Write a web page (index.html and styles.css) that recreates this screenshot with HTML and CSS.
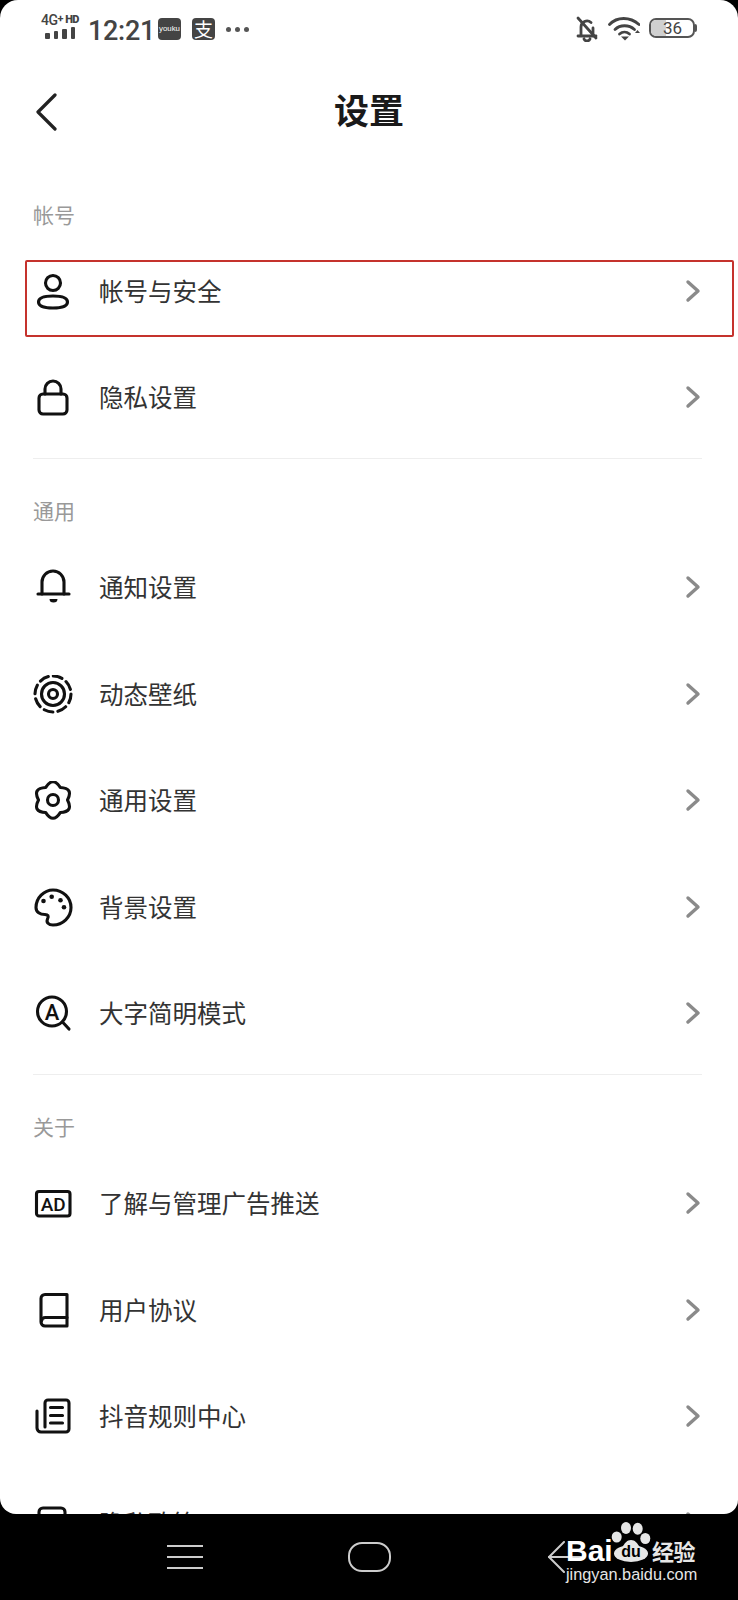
FILE: index.html
```html
<!DOCTYPE html>
<html lang="zh-CN">
<head>
  <meta charset="UTF-8" />
  <meta name="viewport" content="width=device-width, initial-scale=1.0" />
  <title>设置</title>
  <link rel="stylesheet" href="styles.css">
</head>
<body>
  <div class="phone">
    <div class="screen">
      <div class="status-bar">
        <div class="signal">
          <div class="signal-text"><span class="net">4G<sup>+</sup></span><span class="hd">HD</span></div>
          <div class="bars"><i class="b1"></i><i class="b2"></i><i class="b3"></i><i class="b4"></i></div>
        </div>
        <span class="time">12:21</span>
        <span class="app-icon youku">youku</span>
        <span class="app-icon alipay">支</span>
        <span class="more"><i></i><i></i><i></i></span>
        <div class="status-right">
          <svg class="bell-off" viewBox="0 0 22 26" width="22" height="26" fill="none" stroke="#444" stroke-width="2.800" stroke-linecap="round" stroke-linejoin="round">
            <path d="M5 19V11a6 6 0 0 1 10-4.500M17 12v7M2 20h18M8 23a3.200 3 0 0 0 6 0"/>
            <path d="M2 2l18 20"/>
          </svg>
          <svg class="wifi" viewBox="0 0 32 26" width="32" height="26" fill="none" stroke="#444" stroke-width="2.800" stroke-linecap="round">
            <path d="M1.500 8.500C9 .5 22 .5 31 8.500"/>
            <path d="M7 13.500C12 8.500 21 8.500 26.500 13.500"/>
            <path d="M11.500 18C14.500 15.500 18.500 15.500 21.500 18"/>
            <path d="M13 20.500h8l-4 4z" fill="#444" stroke="none"/>
            <path d="M27 17h5l-2.500-3z" fill="#444" stroke="none"/>
          </svg>
          <div class="battery">
            <div class="battery-fill"></div>
            <span class="battery-num">36</span>
          </div>
          <div class="battery-nub"></div>
        </div>
      </div>

      <div class="title-bar">
        <svg class="back" viewBox="0 0 24 38" width="24" height="38" fill="none" stroke="#222" stroke-width="3.200" stroke-linecap="round" stroke-linejoin="round">
          <path d="M20 2L3 19l17 17"/>
        </svg>
        <h1>设置</h1>
      </div>

      <div class="section-label">帐号</div>
      <div class="row">
        <svg class="icon" viewBox="0 0 40 40"><circle cx="20" cy="11" r="7.500"/><path d="M20 24C30 24 34.500 26 34.500 30C34.500 34 30 36 20 36C10 36 5.500 34 5.500 30C5.500 26 10 24 20 24z"/></svg>
        <span class="row-text">帐号与安全</span>
        <svg class="chevron" viewBox="0 0 16 24"><path d="M3 3l10 9-10 9"/></svg>
        <div class="highlight"></div>
      </div>
      <div class="row">
        <svg class="icon" viewBox="0 0 40 40"><path d="M12 16v-5a8 8 0 0 1 16 0v5"/><rect x="6" y="16" width="28" height="20" rx="4"/></svg>
        <span class="row-text">隐私设置</span>
        <svg class="chevron" viewBox="0 0 16 24"><path d="M3 3l10 9-10 9"/></svg>
      </div>
      <div class="divider"></div>

      <div class="section-label">通用</div>
      <div class="row">
        <svg class="icon" viewBox="0 0 40 40"><path d="M9 26V14a11 11 0 0 1 22 0v12"/><path d="M5 26h31"/><path class="solid" d="M16.500 31h8a4 3.500 0 0 1-8 0z"/></svg>
        <span class="row-text">通知设置</span>
        <svg class="chevron" viewBox="0 0 16 24"><path d="M3 3l10 9-10 9"/></svg>
      </div>
      <div class="row">
        <svg class="icon" viewBox="0 0 40 40"><circle cx="20" cy="19" r="18" stroke-dasharray="9 5.100"/><circle cx="20" cy="19" r="11.500"/><circle cx="20" cy="19" r="4.500"/></svg>
        <span class="row-text">动态壁纸</span>
        <svg class="chevron" viewBox="0 0 16 24"><path d="M3 3l10 9-10 9"/></svg>
      </div>
      <div class="row">
        <svg class="icon" viewBox="0 0 40 40"><path d="M34.500 19Q40.800 7 27.250 6.440Q20-5 12.750 6.440Q-.8 7 5.500 19Q-.8 31 12.750 31.560Q20 43 27.250 31.560Q40.800 31 34.500 19z"/><circle cx="20" cy="19" r="5.500"/></svg>
        <span class="row-text">通用设置</span>
        <svg class="chevron" viewBox="0 0 16 24"><path d="M3 3l10 9-10 9"/></svg>
      </div>
      <div class="row">
        <svg class="icon" viewBox="0 0 40 40"><path d="M20 2C30 2 38 10 38 19.500C38 29 30 37 20 37C15.500 37 13 34.500 14.500 31C16 28 15 26.500 12 26.500C7 26.500 3 24 3 19.500C3 10 11 2 20 2Z"/><g class="solid"><circle cx="10.500" cy="13" r="2.300"/><circle cx="18.700" cy="8.800" r="2.300"/><circle cx="27.500" cy="12.200" r="2.300"/><circle cx="31" cy="19.200" r="2.300"/></g></svg>
        <span class="row-text">背景设置</span>
        <svg class="chevron" viewBox="0 0 16 24"><path d="M3 3l10 9-10 9"/></svg>
      </div>
      <div class="row">
        <svg class="icon" viewBox="0 0 40 40"><circle cx="19" cy="17.500" r="14.500"/><path d="M29.500 28l6.500 7"/><text class="icon-text" x="19" y="25.500" text-anchor="middle" font-size="22">A</text></svg>
        <span class="row-text">大字简明模式</span>
        <svg class="chevron" viewBox="0 0 16 24"><path d="M3 3l10 9-10 9"/></svg>
      </div>
      <div class="divider"></div>

      <div class="section-label">关于</div>
      <div class="row">
        <svg class="icon" viewBox="0 0 40 40"><rect x="3.500" y="7.500" width="33.500" height="24.500" rx="2.500"/><text class="icon-text" x="20.200" y="26.500" text-anchor="middle" font-size="19">AD</text></svg>
        <span class="row-text">了解与管理广告推送</span>
        <svg class="chevron" viewBox="0 0 16 24"><path d="M3 3l10 9-10 9"/></svg>
      </div>
      <div class="row">
        <svg class="icon" viewBox="0 0 40 40"><path d="M34 3.500H12a4 4 0 0 0-4 4V31a4 4 0 0 0 4 4h22z"/><path d="M8.500 30a4 4 0 0 1 4-3.500H34"/></svg>
        <span class="row-text">用户协议</span>
        <svg class="chevron" viewBox="0 0 16 24"><path d="M3 3l10 9-10 9"/></svg>
      </div>
      <div class="row">
        <svg class="icon" viewBox="0 0 40 40"><path d="M12 30V6a3 3 0 0 1 3-3h18a3 3 0 0 1 3 3v26a3 3 0 0 1-3 3H8a4 4 0 0 1-4-4V14"/><path d="M17.500 10.500h12M17.500 18.500h12M17.500 26h12"/></svg>
        <span class="row-text">抖音规则中心</span>
        <svg class="chevron" viewBox="0 0 16 24"><path d="M3 3l10 9-10 9"/></svg>
      </div>
      <div class="row">
        <svg class="icon" viewBox="0 0 40 40"><rect x="6" y="4" width="26" height="32" rx="4"/></svg>
        <span class="row-text">隐私政策</span>
        <svg class="chevron" viewBox="0 0 16 24"><path d="M3 3l10 9-10 9"/></svg>
      </div>
    </div>

    <div class="nav-bar">
      <div class="nav-menu"><i></i><i></i><i></i></div>
      <div class="nav-home"></div>
      <svg class="nav-back" viewBox="0 0 36 32" width="36" height="32" fill="none" stroke="#ccc" stroke-width="2" stroke-linecap="round" stroke-linejoin="round">
        <path d="M17 1L2 16l15 15"/><path d="M2 16h32"/>
      </svg>
      <div class="watermark">
        <div class="wm-top">
          <span class="wm-bai">Bai</span>
          <svg class="wm-paw" viewBox="0 0 40 40" width="40" height="40" fill="#e6e6e6">
            <ellipse cx="15" cy="6" rx="5" ry="6"/>
            <ellipse cx="26.700" cy="6.700" rx="5" ry="6"/>
            <ellipse cx="5.700" cy="15" rx="5" ry="5.500"/>
            <ellipse cx="34.300" cy="16.500" rx="5" ry="5.500"/>
            <ellipse cx="20" cy="31.500" rx="17" ry="8.500"/>
            <path d="M20 18c4 0 6 3 8 6H12c2-3 4-6 8-6z"/>
          </svg>
          <span class="wm-du">du</span>
          <span class="wm-cn">经验</span>
        </div>
        <div class="wm-url">jingyan.baidu.com</div>
      </div>
    </div>
  </div>
</body>
</html>
```

FILE: styles.css
```css
* {
  margin: 0;
  padding: 0;
  box-sizing: border-box;
}

html, body {
  width: 738px;
  height: 1600px;
  overflow: hidden;
  background: #000;
}

body {
  font-family: "Noto Sans CJK SC", "Noto Sans", sans-serif;
}

.phone {
  width: 738px;
  height: 1600px;
  display: flex;
  flex-direction: column;
}

.screen {
  height: 1514px;
  background: #fff;
  border-radius: 18px 18px 14px 16px;
  overflow: hidden;
  flex-shrink: 0;
}

/* status bar */
.status-bar {
  height: 58.500px;
  display: flex;
  align-items: flex-start;
  padding: 14px 0 0 41px;
  color: #444;
  font-family: Roboto, sans-serif;
}

.signal {
  width: 38px;
  margin-right: 9px;
}

.signal-text {
  display: flex;
  justify-content: space-between;
  height: 13px;
  line-height: 13px;
  font-size: 14px;
  font-weight: 500;
  letter-spacing: -0.500px;
}

.signal-text sup {
  font-size: 11px;
  font-weight: 700;
  line-height: 0;
  vertical-align: 3px;
}

.hd {
  font-size: 11px;
  font-weight: 900;
  line-height: 9px;
  margin-top: 1px;
}

.bars {
  display: flex;
  align-items: flex-end;
  gap: 4px;
  height: 12px;
  margin-left: 4px;
}

.bars i {
  display: block;
  width: 4.500px;
  background: #444;
  border-radius: 1px;
}

.bars .b1 { height: 6px; }
.bars .b2 { height: 8px; }
.bars .b3 { height: 10px; }
.bars .b4 { height: 12px; }

.time {
  font-size: 27px;
  font-weight: 500;
  line-height: 32px;
  letter-spacing: -0.300px;
  width: 70px;
  margin-top: 1px;
}

.app-icon {
  width: 23px;
  height: 22px;
  margin-top: 4px;
  background: #444;
  color: #fff;
  border-radius: 4px;
  text-align: center;
}

.youku {
  font-size: 7.800px;
  line-height: 22px;
  font-family: "Liberation Sans", sans-serif;
  margin-right: 11px;
}

.alipay {
  font-size: 19px;
  line-height: 22px;
  font-family: "Noto Sans CJK SC", sans-serif;
  margin-right: 11px;
}

.more {
  display: flex;
  gap: 4px;
  margin-top: 13px;
}

.more i {
  display: block;
  width: 5px;
  height: 5px;
  border-radius: 50%;
  background: #555;
}

.status-right {
  display: flex;
  align-items: flex-start;
  margin-left: auto;
  margin-right: 41px;
}

.bell-off {
  margin: 2px 10px 0 0;
}

.wifi {
  margin: 2px 9px 0 0;
}

.battery {
  position: relative;
  width: 46px;
  height: 20px;
  margin-top: 4px;
  border: 2px solid #555;
  border-radius: 7px;
  overflow: hidden;
}

.battery-fill {
  width: 15px;
  height: 100%;
  background: #d0d0d0;
}

.battery-num {
  position: absolute;
  top: 0;
  left: 12px;
  font-size: 17px;
  line-height: 16px;
  color: #444;
}

.battery-nub {
  width: 2px;
  height: 8px;
  margin-top: 10px;
  background: #555;
  border-radius: 0 2px 2px 0;
}

/* title */
.title-bar {
  height: 104px;
  display: flex;
  align-items: center;
  justify-content: center;
  position: relative;
  margin-bottom: 29px;
}

.back {
  position: absolute;
  left: 35px;
  top: 34px;
}

.title-bar h1 {
  font-size: 35px;
  font-weight: 700;
  line-height: 44px;
  margin-bottom: 3px;
  color: #1a1a1a;
}

/* list */
.section-label {
  height: 46px;
  line-height: 44px;
  padding-left: 33px;
  font-size: 21px;
  color: #999;
}

.row {
  position: relative;
  height: 106.400px;
  display: flex;
  align-items: center;
  padding: 0 37px 0 33px;
}

.icon {
  width: 40px;
  height: 40px;
  margin: 2px 26px 0 0;
  flex-shrink: 0;
  fill: none;
  stroke: #111;
  stroke-width: 3.100;
  stroke-linecap: round;
  stroke-linejoin: round;
}

.icon .solid {
  fill: #111;
  stroke: none;
}

.icon-text {
  font-family: Roboto, sans-serif;
  font-weight: 500;
  fill: #111;
  stroke: none;
}

.row-text {
  flex: 1;
  font-size: 24.500px;
  line-height: 36px;
  color: #333;
}

.chevron {
  width: 16px;
  height: 24px;
  fill: none;
  stroke: #8a8a8a;
  stroke-width: 3.400;
  stroke-linecap: round;
  stroke-linejoin: round;
}

.highlight {
  position: absolute;
  left: 25px;
  top: 22px;
  width: 709px;
  height: 77px;
  border: 2px solid #c5322d;
  border-radius: 2px;
}

.divider {
  height: 1px;
  margin: 8px 36px 29px 33px;
  background: #eee;
}

/* bottom nav */
.nav-bar {
  position: relative;
  flex: 1;
  background: #000;
  display: flex;
  align-items: center;
}

.nav-menu {
  width: 36px;
  margin-left: 167px;
  display: flex;
  flex-direction: column;
  gap: 9px;
}

.nav-menu i {
  display: block;
  height: 2px;
  background: #ccc;
}

.nav-home {
  width: 43px;
  height: 30px;
  margin-left: 145px;
  border: 2px solid #ccc;
  border-radius: 14px;
}

.nav-back {
  margin-left: 156px;
}

.watermark {
  position: absolute;
  left: 566px;
  top: 7px;
  color: #e6e6e6;
}

.wm-top {
  display: flex;
  align-items: flex-end;
  height: 41px;
  position: relative;
}

.wm-bai {
  font-family: "Liberation Sans", sans-serif;
  font-weight: 700;
  font-size: 30px;
  line-height: 34px;
  width: 45px;
  margin-bottom: -6px;
  color: #fff;
}

.wm-paw {
  flex-shrink: 0;
}

.wm-du {
  position: absolute;
  left: 47px;
  top: 22px;
  width: 36px;
  text-align: center;
  font-family: "Liberation Sans", sans-serif;
  font-weight: 700;
  font-size: 16px;
  line-height: 18px;
  color: #000;
}

.wm-cn {
  font-size: 22px;
  line-height: 28px;
  margin-left: 1px;
  margin-bottom: -2px;
  font-weight: 700;
  letter-spacing: -0.500px;
  white-space: nowrap;
}

.wm-url {
  font-family: "Liberation Sans", sans-serif;
  font-size: 16.300px;
  line-height: 20px;
  margin-top: 2px;
  white-space: nowrap;
}
```
